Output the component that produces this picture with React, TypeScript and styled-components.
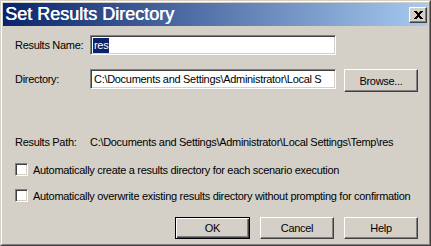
import React from 'react';
import styled, { createGlobalStyle } from 'styled-components';

const GlobalStyle = createGlobalStyle`
  html, body {
    margin: 0;
    padding: 0;
    background: #d4d0c8;
  }
`;

const Window = styled.div`
  box-sizing: border-box;
  width: 431px;
  height: 246px;
  overflow: hidden;
  background: #d4d0c8;
  border: 1px solid;
  border-color: #d4d0c8 #404040 #404040 #d4d0c8;
  font-family: "Liberation Sans", Arial, sans-serif;
  font-size: 11px;
  letter-spacing: -0.3px;
  color: #000;
`;

const Frame = styled.div`
  box-sizing: border-box;
  height: 100%;
  border: 1px solid;
  border-color: #fff #808080 #808080 #fff;
  padding: 1px;
  display: flex;
  flex-direction: column;
`;

const TitleBar = styled.div`
  flex: none;
  height: 23px;
  display: flex;
  align-items: center;
  justify-content: space-between;
  padding: 0 1px;
  background: linear-gradient(to right, #0a246a, #a6caf0);
`;

const Title = styled.span`
  color: #fff;
  font-size: 18px;
  letter-spacing: 0;
  line-height: 23px;
  white-space: nowrap;
  padding-left: 1px;
  text-shadow: 0.5px 0 0 #fff;
`;

const CloseButton = styled.button`
  box-sizing: border-box;
  width: 18px;
  height: 16px;
  padding: 0;
  margin: 0;
  background: #d4d0c8;
  border: 1px solid;
  border-color: #fff #404040 #404040 #fff;
  box-shadow: inset -1px -1px #808080;
  display: flex;
  align-items: center;
  justify-content: center;
`;

const Body = styled.div`
  flex: 1;
  display: flex;
  flex-direction: column;
  padding: 0 10px 0 12px;
`;

const FieldRow = styled.div<{ $top: number; $height: number }>`
  display: grid;
  grid-template-columns: 75px 246px 1fr;
  grid-template-rows: ${(p) => p.$height}px;
  align-items: start;
  height: ${(p) => p.$height}px;
  margin-top: ${(p) => p.$top}px;
`;

const Label = styled.label`
  height: 20px;
  line-height: 20px;
  white-space: nowrap;
`;

const TextBox = styled.div`
  box-sizing: border-box;
  height: 20px;
  background: #fff;
  border: 1px solid;
  border-color: #808080 #fff #fff #808080;
  box-shadow: inset 1px 1px #404040, inset -1px -1px #d4d0c8;
  padding: 0 3px;
  line-height: 18px;
  white-space: nowrap;
  overflow: hidden;
`;

const Selected = styled.span`
  background: #0a246a;
  color: #fff;
  padding: 1px 1px 2px;
  margin-left: -1px;
`;

const Button = styled.button<{ $default?: boolean; $height?: number }>`
  box-sizing: border-box;
  width: ${(p) => (p.$default ? 75 : 74)}px;
  height: ${(p) => p.$height ?? 22}px;
  justify-self: end;
  padding: 0;
  margin: 0;
  background: #d4d0c8;
  font-family: inherit;
  font-size: 11px;
  letter-spacing: -0.3px;
  color: #000;
  border: 1px solid;
  border-color: ${(p) => (p.$default ? '#000' : '#fff #404040 #404040 #fff')};
  box-shadow: ${(p) =>
    p.$default
      ? 'inset 1px 1px #fff, inset -1px -1px #404040, inset -2px -2px #808080'
      : 'inset -1px -1px #808080'};
`;

const PathRow = styled.div`
  display: grid;
  grid-template-columns: 75px auto;
  height: 13px;
  margin-top: 44px;
  line-height: 13px;
  white-space: nowrap;
`;

const CheckRow = styled.label<{ $top: number }>`
  display: flex;
  align-items: center;
  gap: 5px;
  height: 13px;
  margin-top: ${(p) => p.$top}px;
  white-space: nowrap;
`;

const CheckBox = styled.span`
  box-sizing: border-box;
  width: 13px;
  height: 13px;
  flex: none;
  background: #fff;
  border: 1px solid;
  border-color: #808080 #fff #fff #808080;
  box-shadow: inset 1px 1px #404040, inset -1px -1px #d4d0c8;
`;

const ButtonRow = styled.div`
  display: flex;
  justify-content: flex-end;
  gap: 10px;
  margin-top: 15px;
`;

const CloseIcon = () => (
  <svg width="9" height="8" viewBox="0 0 9 8" shapeRendering="crispEdges">
    <path
      d="M0 0h3v1h-3zM6 0h3v1h-3zM1 1h3v1h-3zM5 1h3v1h-3zM2 2h5v1h-5zM3 3h3v1h-3zM3 4h3v1h-3zM2 5h5v1h-5zM1 6h3v1h-3zM5 6h3v1h-3zM0 7h3v1h-3zM6 7h3v1h-3z"
      fill="#000"
    />
  </svg>
);

export default function App() {
  return (
    <>
      <GlobalStyle />
      <Window>
        <Frame>
          <TitleBar>
            <Title>Set Results Directory</Title>
            <CloseButton aria-label="Close">
              <CloseIcon />
            </CloseButton>
          </TitleBar>
          <Body>
            <FieldRow $top={9} $height={20}>
              <Label>Results Name:</Label>
              <TextBox>
                <Selected>res</Selected>
              </TextBox>
            </FieldRow>
            <FieldRow $top={14} $height={23}>
              <Label>Directory:</Label>
              <TextBox>C:\Documents and Settings\Administrator\Local S</TextBox>
              <Button $height={23}>Browse...</Button>
            </FieldRow>
            <PathRow>
              <span>Results Path:</span>
              <span>C:\Documents and Settings\Administrator\Local Settings\Temp\res</span>
            </PathRow>
            <CheckRow $top={14}>
              <CheckBox />
              Automatically create a results directory for each scenario execution
            </CheckRow>
            <CheckRow $top={13}>
              <CheckBox />
              Automatically overwrite existing results directory without prompting for confirmation
            </CheckRow>
            <ButtonRow>
              <Button $default>OK</Button>
              <Button>Cancel</Button>
              <Button>Help</Button>
            </ButtonRow>
          </Body>
        </Frame>
      </Window>
    </>
  );
}
